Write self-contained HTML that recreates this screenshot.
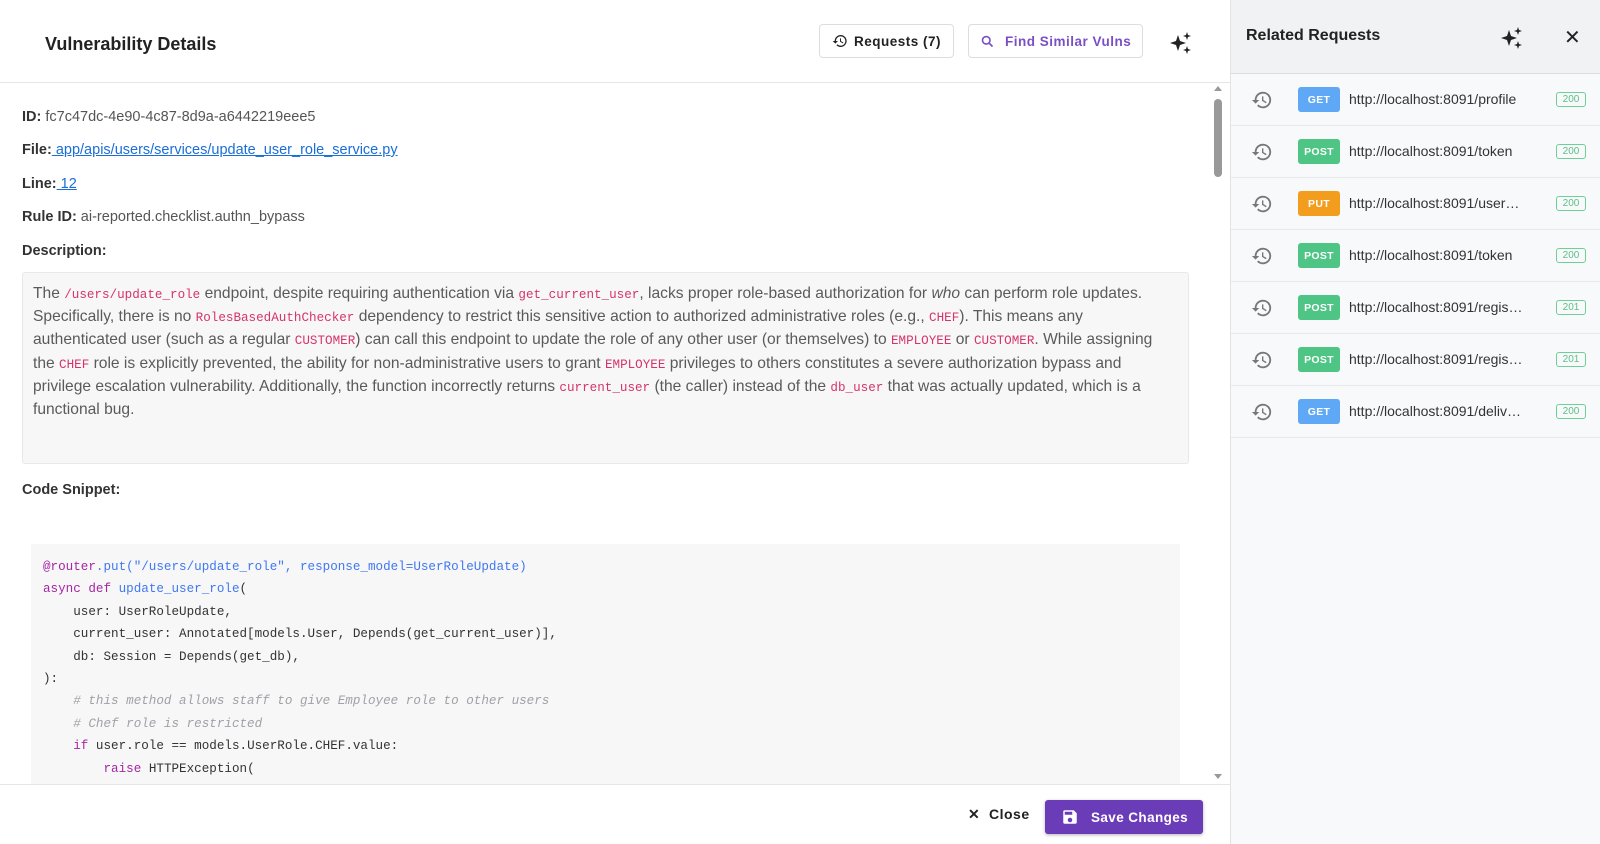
<!DOCTYPE html>
<html><head><meta charset="utf-8"><style>
*{box-sizing:border-box;margin:0;padding:0}
body{width:1600px;height:844px;overflow:hidden;font-family:"Liberation Sans",sans-serif;background:#fff;color:#333;position:relative}
.hdr{position:absolute;left:0;top:0;width:1230px;height:83px;border-bottom:1px solid #e6e6e6}
.title{position:absolute;left:45px;top:34px;font-size:18px;font-weight:bold;color:#222}
.btn{position:absolute;top:24px;height:34px;border:1px solid #ddd;border-radius:4px;font-size:13.5px;font-weight:bold;letter-spacing:.5px;display:flex;align-items:center;justify-content:center;gap:6px;background:#fff}
.main{position:absolute;left:22px;top:86px;width:1170px;font-size:14.5px;color:#555}
.row{position:absolute;left:0;white-space:nowrap}
b{color:#333}
a{color:#1a6ed8;text-decoration:underline}
.desc{position:absolute;left:0;top:186px;width:1167px;height:192px;background:#f7f7f7;border:1px solid #e8e8e8;border-radius:3px;padding:9px 10px;line-height:23.2px;font-size:15.6px;color:#5a5a5a}
code{font-family:"Liberation Mono",monospace;font-size:12.6px;color:#d6336c;line-height:1}
.code{position:absolute;left:9px;top:458px;width:1149px;height:240px;background:#f7f7f7;padding:12px 12px;font-family:"Liberation Mono",monospace;font-size:12.6px;line-height:22.4px;white-space:pre;color:#333}
.k{color:#a626a4}.f{color:#4078f2}.c{color:#a0a1a7;font-style:italic}
.sb{position:absolute;left:1212px;top:86px;width:12px;height:696px}
.footer{position:absolute;left:0;top:784px;width:1230px;height:60px;border-top:1px solid #e6e6e6;background:#fff}
.panel{position:absolute;left:1230px;top:0;width:370px;height:844px;background:#f8f9fa;border-left:1px solid #e3e3e3}
.ph{height:74px;background:#f1f2f4;border-bottom:1px solid #ddd;position:relative}
.req{height:52px;border-bottom:1px solid #e8e9eb;position:relative;font-size:14px;color:#333}
.m{position:absolute;left:67px;top:13px;width:42px;height:25px;border-radius:3px;color:#fff;font-size:10.5px;font-weight:bold;display:flex;align-items:center;justify-content:center;letter-spacing:.3px}
.u{position:absolute;left:118px;top:17px}
.s{position:absolute;left:325px;top:18px;width:30px;height:15px;border:1px solid #6fcf97;border-radius:3px;color:#5cbf85;font-size:10px;display:flex;align-items:center;justify-content:center}
.hi{position:absolute;left:20px;top:15px}
</style></head><body>
<div class="hdr">
<div class="title">Vulnerability Details</div>
<div class="btn" style="left:819px;width:135px;color:#222"><svg width="16" height="16" viewBox="0 0 24 24"><path d="M13 3a9 9 0 0 0-9 9H1l4 4 4-4H6a7 7 0 1 1 2.05 4.95l-1.42 1.42A9 9 0 1 0 13 3zm-1 5v5l4.25 2.52.77-1.28-3.52-2.09V8z" fill="#222"/></svg>Requests (7)</div>
<div class="btn" style="left:968px;width:175px;color:#7b4fc4"><svg width="15" height="15" viewBox="0 0 24 24"><circle cx="10" cy="10" r="6" fill="none" stroke="#7b4fc4" stroke-width="2.6"/><path d="M14.5 14.5 20 20" stroke="#7b4fc4" stroke-width="2.8"/></svg>&nbsp;Find Similar Vulns</div>
<svg style="position:absolute;left:1169px;top:31px" width="24" height="24" viewBox="0 0 24 24"><path d="M9 4l2 6 6 2-6 2-2 6-2-6-6-2 6-2z M18 1l1 3 3 1-3 1-1 3-1-3-3-1 3-1z M18 15l1 3 3 1-3 1-1 3-1-3-3-1 3-1z" fill="#222"/></svg>
</div>
<div class="main">
<div class="row" style="top:23px"><b>ID:</b> fc7c47dc-4e90-4c87-8d9a-a6442219eee5</div>
<div class="row" style="top:56px"><b>File:</b><a> app/apis/users/services/update_user_role_service.py</a></div>
<div class="row" style="top:90px"><b>Line:</b><a> 12</a></div>
<div class="row" style="top:123px"><b>Rule ID:</b> ai-reported.checklist.authn_bypass</div>
<div class="row" style="top:157px"><b>Description:</b></div>
<div class="desc">The <code>/users/update_role</code> endpoint, despite requiring authentication via <code>get_current_user</code>, lacks proper role-based authorization for <i>who</i> can perform role updates. Specifically, there is no <code>RolesBasedAuthChecker</code> dependency to restrict this sensitive action to authorized administrative roles (e.g., <code>CHEF</code>). This means any authenticated user (such as a regular <code>CUSTOMER</code>) can call this endpoint to update the role of any other user (or themselves) to <code>EMPLOYEE</code> or <code>CUSTOMER</code>. While assigning the <code>CHEF</code> role is explicitly prevented, the ability for non-administrative users to grant <code>EMPLOYEE</code> privileges to others constitutes a severe authorization bypass and privilege escalation vulnerability. Additionally, the function incorrectly returns <code>current_user</code> (the caller) instead of the <code>db_user</code> that was actually updated, which is a functional bug.</div>
<div class="row" style="top:396px"><b>Code Snippet:</b></div>
<div class="code"><span class="k">@router</span><span class="f">.put("/users/update_role", response_model=UserRoleUpdate)</span>
<span class="k">async def</span> <span class="f">update_user_role</span>(
    user: UserRoleUpdate,
    current_user: Annotated[models.User, Depends(get_current_user)],
    db: Session = Depends(get_db),
):
    <span class="c"># this method allows staff to give Employee role to other users</span>
    <span class="c"># Chef role is restricted</span>
    <span class="k">if</span> user.role == models.UserRole.CHEF.value:
        <span class="k">raise</span> HTTPException(</div>
</div>
<div class="sb"><div style="position:absolute;left:2px;top:0;border:4px solid transparent;border-bottom:5px solid #999;border-top:0"></div><div style="position:absolute;left:2px;top:13px;width:8px;height:78px;background:#999;border-radius:4px"></div><div style="position:absolute;left:2px;top:688px;border:4px solid transparent;border-top:5px solid #999;border-bottom:0"></div></div>
<div class="footer">
<div style="position:absolute;left:968px;top:21px;font-size:14px;font-weight:bold;color:#222;letter-spacing:.5px">✕&nbsp; Close</div>
<div style="position:absolute;left:1045px;top:15px;width:158px;height:34px;background:#6a3cb8;border-radius:3px;color:#fff;font-size:13.5px;font-weight:bold;letter-spacing:.4px;display:flex;align-items:center;padding-left:16px;gap:12px;box-shadow:0 1px 3px rgba(0,0,0,.3)"><svg width="18" height="18" viewBox="0 0 24 24"><path d="M17 3H5a2 2 0 0 0-2 2v14a2 2 0 0 0 2 2h14a2 2 0 0 0 2-2V7zm-5 16a3 3 0 1 1 0-6 3 3 0 0 1 0 6zm3-10H5V5h10z" fill="#fff"/></svg>Save Changes</div>
</div>
<div class="panel">
<div class="ph"><div style="position:absolute;left:15px;top:27px;font-size:16px;font-weight:bold;color:#222">Related Requests</div>
<svg style="position:absolute;left:269px;top:26px" width="24" height="24" viewBox="0 0 24 24"><path d="M9 4l2 6 6 2-6 2-2 6-2-6-6-2 6-2z M18 1l1 3 3 1-3 1-1 3-1-3-3-1 3-1z M18 15l1 3 3 1-3 1-1 3-1-3-3-1 3-1z" fill="#222"/></svg>
<div style="position:absolute;left:333px;top:25px;font-size:20px;color:#222">✕</div></div>
<div id="rows"></div>
</div>
<script>
var d=[["GET","#5fa8f5","profile","200"],["POST","#4fc585","token","200"],["PUT","#f29d1d","user…","200"],["POST","#4fc585","token","200"],["POST","#4fc585","regis…","201"],["POST","#4fc585","regis…","201"],["GET","#5fa8f5","deliv…","200"]];
var h="";d.forEach(function(r){h+='<div class="req"><svg class="hi" width="22" height="22" viewBox="0 0 24 24"><path d="M13 3a9 9 0 0 0-9 9H1l4 4 4-4H6a7 7 0 1 1 2.05 4.95l-1.42 1.42A9 9 0 1 0 13 3zm-1 5v5l4.25 2.52.77-1.28-3.52-2.09V8z" fill="#777"/></svg><div class="m" style="background:'+r[1]+'">'+r[0]+'</div><div class="u">http://localhost:8091/'+r[2]+'</div><div class="s">'+r[3]+'</div></div>'});
document.getElementById("rows").innerHTML=h;
</script>
</body></html>
